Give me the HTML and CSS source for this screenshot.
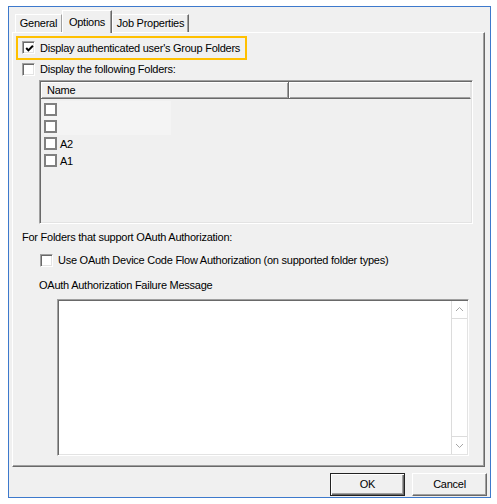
FILE: index.html
```html
<!DOCTYPE html>
<html>
<head>
<meta charset="utf-8">
<link rel="stylesheet" href="styles.css">
</head>
<body>
<div class="window">
  <div class="tabstrip">
    <div class="tab t-general">General</div>
    <div class="tab active t-options">Options</div>
    <div class="tab t-job">Job Properties</div>
  </div>
  <div class="panel">
    <div class="hl">
      <span class="cb"><svg width="9" height="9" viewBox="0 0 9 9"><polyline points="1.2,4 3.4,6.4 7.9,1.7" fill="none" stroke="#000" stroke-width="2"/></svg></span>
      <span class="lbl">Display authenticated user's Group Folders</span>
    </div>
    <div class="row row2">
      <span class="cb"></span>
      <span class="lbl">Display the following Folders:</span>
    </div>
    <div class="list">
      <div class="lv-head">
        <div class="lv-col c1">Name</div>
        <div class="lv-col c2"></div>
      </div>
      <div class="lv-rows">
        <div class="lv-row"><span class="band"><span class="lcb"></span></span></div>
        <div class="lv-row"><span class="band"><span class="lcb"></span></span></div>
        <div class="lv-row"><span class="lcb"></span><span class="ltxt">A2</span></div>
        <div class="lv-row"><span class="lcb"></span><span class="ltxt">A1</span></div>
      </div>
    </div>
    <div class="label sect">For Folders that support OAuth Authorization:</div>
    <div class="row oauth">
      <span class="cb"></span>
      <span class="lbl">Use OAuth Device Code Flow Authorization (on supported folder types)</span>
    </div>
    <div class="label msg">OAuth Authorization Failure Message</div>
    <div class="textarea">
      <div class="ta-body"></div>
      <div class="ta-scroll">
        <div class="arr up"><svg width="15" height="17" viewBox="0 0 15 17"><polyline points="4,10 7.5,6.5 11,10" fill="none" stroke="#a6a6a6" stroke-width="1"/></svg></div>
        <div class="track"></div>
        <div class="arr down"><svg width="15" height="17" viewBox="0 0 15 17"><polyline points="4,7 7.5,10.5 11,7" fill="none" stroke="#a6a6a6" stroke-width="1"/></svg></div>
      </div>
    </div>
  </div>
  <div class="buttons">
    <div class="btn default">OK</div>
    <div class="btn">Cancel</div>
  </div>
</div>
</body>
</html>
```
FILE: styles.css
```css
html, body {
  margin: 0;
  padding: 0;
  background: #fff;
}
body {
  font-family: "Liberation Sans", Arial, sans-serif;
  font-size: 11px;
  letter-spacing: -0.25px;
  color: #000;
}
.window {
  margin: 6px 0 0 8px;
  width: 483px;
  height: 492px;
  box-sizing: border-box;
  border: 1px solid #3d79cc;
  background: #f0f0f0;
  display: flex;
  flex-direction: column;
}
.tabstrip {
  height: 25px;
  display: flex;
  align-items: flex-end;
  padding-left: 6px;
  position: relative;
  z-index: 2;
}
.tab {
  height: 18px;
  box-sizing: border-box;
  border-top: 1px solid #fff;
  border-left: 1px solid #fff;
  border-right: 1px solid #696969;
  box-shadow: inset -1px 0 0 #a0a0a0;
  line-height: 17px;
  text-align: center;
  background: #f0f0f0;
}
.t-general { width: 47px; box-shadow: none; border-right-color: #a0a0a0; }
.t-options { width: 50px; }
.t-job { width: 77px; }
.tab.active {
  height: 23px;
  margin-bottom: -1px;
  line-height: 18px;
  padding-top: 2px;
}
.panel {
  margin-left: 3px;
  width: 473px;
  height: 435px;
  box-sizing: border-box;
  border-top: 1px solid #fff;
  border-left: 1px solid #fff;
  border-right: 1px solid #696969;
  border-bottom: 1px solid #696969;
  box-shadow: inset -1px -1px 0 #a0a0a0;
  display: flex;
  flex-direction: column;
  align-items: flex-start;
}
.cb {
  width: 13px;
  height: 13px;
  box-sizing: border-box;
  border: 1px solid;
  border-color: #a0a0a0 #fff #fff #a0a0a0;
  box-shadow: inset 1px 1px 0 #696969, inset -1px -1px 0 #e3e3e3;
  background: #fff;
  display: flex;
  align-items: center;
  justify-content: center;
  flex: none;
}
.cb svg {
  margin: 1px 0 0 1px;
}
.lbl {
  margin-left: 5px;
  white-space: nowrap;
}
.hl {
  margin: 3px 0 0 3px;
  width: 231px;
  height: 24px;
  box-sizing: border-box;
  border: 2px solid #ffc000;
  display: flex;
  align-items: center;
  padding: 0 0 1px 4px;
}
.row {
  display: flex;
  align-items: center;
  height: 18px;
}
.row2 {
  margin-left: 9px;
}
.list {
  margin: 2px 0 0 26px;
  width: 434px;
  height: 144px;
  box-sizing: border-box;
  border-top: 1px solid #a0a0a0;
  border-left: 1px solid #a0a0a0;
  border-right: 1px solid #fff;
  border-bottom: 1px solid #fff;
  box-shadow: inset 1px 1px 0 #696969, inset -1px -1px 0 #e3e3e3;
  padding: 1px 1px 1px 1px;
  background: #f0f0f0;
}
.lv-head {
  display: flex;
  height: 17px;
}
.lv-col {
  box-sizing: border-box;
  height: 17px;
  border-right: 1px solid #696969;
  border-bottom: 1px solid #696969;
  box-shadow: inset 1px 1px 0 #fff, inset -1px -1px 0 #a0a0a0;
  line-height: 16px;
  padding-left: 6px;
}
.c1 { width: 249px; }
.c2 { width: 182px; border-right-color: #e3e3e3; box-shadow: inset 1px 1px 0 #fff, inset 0 -1px 0 #a0a0a0; }
.lv-rows {
  padding-top: 2px;
}
.lv-row {
  height: 17px;
  display: flex;
  align-items: center;
  padding-left: 3px;
}
.band {
  display: flex;
  align-items: center;
  width: 127px;
  height: 17px;
  background: #f4f4f4;
}
.lcb {
  width: 13px;
  height: 13px;
  box-sizing: border-box;
  border: 2px solid #808080;
  background: #fff;
  flex: none;
}
.ltxt {
  margin-left: 3px;
}
.label {
  height: 14px;
  line-height: 14px;
  white-space: nowrap;
}
.sect {
  margin: 6px 0 0 9px;
}
.oauth {
  margin: 7px 0 0 27px;
}
.msg {
  margin: 9px 0 0 26px;
}
.textarea {
  margin: 7px 0 0 44px;
  width: 412px;
  height: 157px;
  box-sizing: border-box;
  border-top: 1px solid #a0a0a0;
  border-left: 1px solid #a0a0a0;
  border-right: 1px solid #fff;
  border-bottom: 1px solid #fff;
  box-shadow: inset 1px 1px 0 #696969, inset -1px -1px 0 #e3e3e3;
  padding: 1px;
  display: flex;
  background: #fff;
  background-clip: content-box;
}
.ta-body {
  flex: 1;
  background: #fff;
}
.ta-scroll {
  width: 16px;
  box-sizing: border-box;
  border-left: 1px solid #dcdcdc;
  display: flex;
  flex-direction: column;
  background: #fff;
}
.arr {
  height: 18px;
  box-sizing: border-box;
  display: flex;
  align-items: center;
  justify-content: center;
}
.arr.up { border-bottom: 1px solid #dcdcdc; }
.arr.down { border-top: 1px solid #dcdcdc; }
.track { flex: 1; }
.buttons {
  margin-top: 6px;
  display: flex;
  justify-content: flex-end;
  gap: 7px;
  padding-right: 3px;
}
.btn {
  width: 75px;
  height: 23px;
  box-sizing: border-box;
  border: 1px solid;
  border-color: #fff #696969 #696969 #fff;
  box-shadow: inset -1px -1px 0 #a0a0a0;
  background: #f0f0f0;
  text-align: center;
  line-height: 20px;
}
.btn.default {
  border-color: #222;
  box-shadow: inset 1px 1px 0 #fff, inset -1px -1px 0 #696969, inset -2px -2px 0 #a0a0a0;
}
```
